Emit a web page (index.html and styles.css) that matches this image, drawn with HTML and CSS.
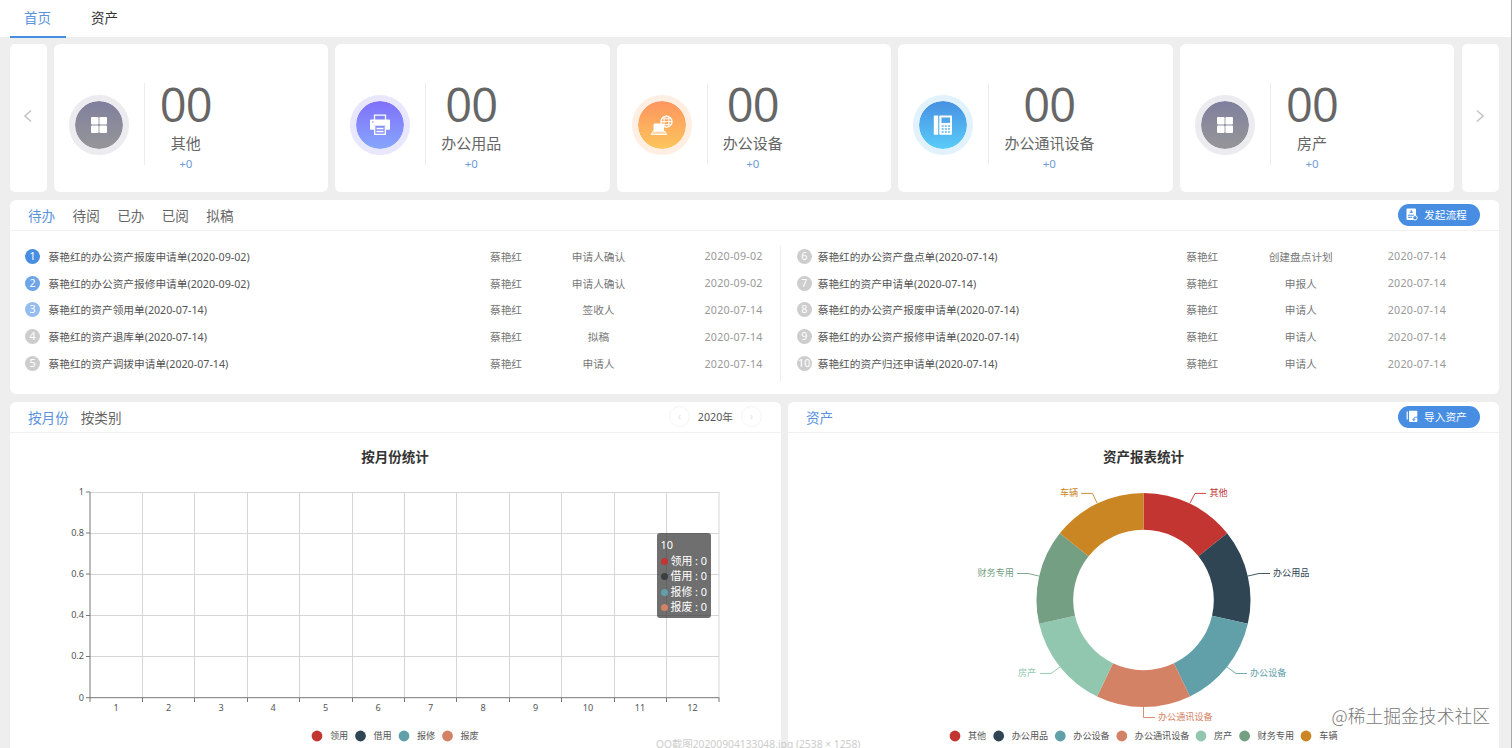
FILE: index.html
```
<!DOCTYPE html>
<html lang="zh-CN">
<head>
    <meta charset="UTF-8">
    <meta name="viewport" content="width=device-width, initial-scale=1.0">
    <title>资产管理</title>
    <link rel="stylesheet" href="styles.css">
</head>
<body>
    <nav class="top-nav">
        <a class="nav-item active">首页</a>
        <a class="nav-item">资产</a>
    </nav>

    <main class="page">
        <section class="stats">
            <div class="stat-arrow">
                <svg width="10" height="14" viewBox="0 0 10 14"><path d="M8 1.5 L2 7 L8 12.5"/></svg>
            </div>
            <div class="stat-card">
                <div class="stat-icon gray">
                    <svg width="24" height="24" viewBox="0 0 24 24" fill="#fff">
                        <rect x="4" y="4" width="7.6" height="7.6" rx="1"/><rect x="12.4" y="4" width="7.6" height="7.6" rx="1"/>
                        <rect x="4" y="12.4" width="7.6" height="7.6" rx="1"/><rect x="12.4" y="12.4" width="7.6" height="7.6" rx="1"/>
                    </svg>
                </div>
                <div class="stat-info">
                    <div class="stat-num">00</div>
                    <div class="stat-name">其他</div>
                    <div class="stat-add">+0</div>
                </div>
            </div>
            <div class="stat-card">
                <div class="stat-icon purple">
                    <svg width="24" height="24" viewBox="0 0 24 24">
                        <path d="M6.5 7V2.2h11V7" fill="none" stroke="#fff" stroke-width="1.3"/>
                        <path d="M3 6.5h18a1 1 0 0 1 1 1v8.3a1 1 0 0 1-1 1h-3v-4H6v4H3a1 1 0 0 1-1-1V7.5a1 1 0 0 1 1-1z" fill="#fff"/>
                        <path d="M6.7 13v8.3h10.6V13" fill="none" stroke="#fff" stroke-width="1.3"/>
                        <path d="M8.5 15.5h7M8.5 18.5h7" stroke="#fff" stroke-width="1.4"/>
                        <circle cx="4.8" cy="9" r=".8" fill="#8a86fb"/>
                    </svg>
                </div>
                <div class="stat-info">
                    <div class="stat-num">00</div>
                    <div class="stat-name">办公用品</div>
                    <div class="stat-add">+0</div>
                </div>
            </div>
            <div class="stat-card">
                <div class="stat-icon orange">
                    <svg width="24" height="24" viewBox="0 0 24 24" fill="none" stroke="#fff">
                        <circle cx="16.5" cy="8.7" r="5.6" stroke-width="1.3"/>
                        <ellipse cx="16.5" cy="8.7" rx="2.5" ry="5.6"/>
                        <path d="M11 8.7h11M12 5.8h9M12 11.7h9"/>
                        <path d="M4 11h9.5v7H4z" fill="#fff"/>
                        <path d="M3.2 18.2h11.6l2 3.3H1.2z" fill="#ffd9a8" stroke-width=".9"/>
                    </svg>
                </div>
                <div class="stat-info">
                    <div class="stat-num">00</div>
                    <div class="stat-name">办公设备</div>
                    <div class="stat-add">+0</div>
                </div>
            </div>
            <div class="stat-card">
                <div class="stat-icon blue">
                    <svg width="24" height="24" viewBox="0 0 24 24">
                        <path d="M3.6 2.4h3.6v19.4H3.6a.8.8 0 0 1-.8-.8V3.2a.8.8 0 0 1 .8-.8z" fill="#fff"/>
                        <rect x="8.3" y="2.4" width="12.7" height="19.4" rx=".8" fill="#fff"/>
                        <rect x="10.5" y="4.5" width="8.6" height="5.4" fill="#4ea7ea"/>
                        <path d="M10.7 13h8.2M10.7 16h8.2M10.7 19h8.2" stroke="#58b9f0" stroke-width="1.5" stroke-dasharray="2 1.1"/>
                    </svg>
                </div>
                <div class="stat-info">
                    <div class="stat-num">00</div>
                    <div class="stat-name">办公通讯设备</div>
                    <div class="stat-add">+0</div>
                </div>
            </div>
            <div class="stat-card">
                <div class="stat-icon gray">
                    <svg width="24" height="24" viewBox="0 0 24 24" fill="#fff">
                        <rect x="4" y="4" width="7.6" height="7.6" rx="1"/><rect x="12.4" y="4" width="7.6" height="7.6" rx="1"/>
                        <rect x="4" y="12.4" width="7.6" height="7.6" rx="1"/><rect x="12.4" y="12.4" width="7.6" height="7.6" rx="1"/>
                    </svg>
                </div>
                <div class="stat-info">
                    <div class="stat-num">00</div>
                    <div class="stat-name">房产</div>
                    <div class="stat-add">+0</div>
                </div>
            </div>
            <div class="stat-arrow">
                <svg width="10" height="14" viewBox="0 0 10 14"><path d="M2 1.5 L8 7 L2 12.5"/></svg>
            </div>
        </section>

        <section class="panel todo">
            <header class="panel-head">
                <div class="tabs wide">
                    <a class="active">待办</a><a>待阅</a><a>已办</a><a>已阅</a><a>拟稿</a>
                </div>
                <button class="btn">
                    <svg width="12" height="13" viewBox="0 0 12 13">
                        <rect x=".5" y=".5" width="9.5" height="11.5" rx="1" fill="#fff"/>
                        <path d="M5.2 2v3M3.5 4.2h3.5M2 7.2h6M2 9.3h4" stroke="#478ee2" fill="none"/>
                        <circle cx="9" cy="9.8" r="2.2" fill="#478ee2" stroke="#fff"/>
                    </svg>
                    <span>发起流程</span>
                </button>
            </header>
            <div class="todo-body">
                <ul class="todo-list left">
                    <li><i class="n1">1</i><b>蔡艳红的办公资产报废申请单(2020-09-02)</b><span>蔡艳红</span><span>申请人确认</span><time>2020-09-02</time></li>
                    <li><i class="n2">2</i><b>蔡艳红的办公资产报修申请单(2020-09-02)</b><span>蔡艳红</span><span>申请人确认</span><time>2020-09-02</time></li>
                    <li><i class="n3">3</i><b>蔡艳红的资产领用单(2020-07-14)</b><span>蔡艳红</span><span>签收人</span><time>2020-07-14</time></li>
                    <li><i>4</i><b>蔡艳红的资产退库单(2020-07-14)</b><span>蔡艳红</span><span>拟稿</span><time>2020-07-14</time></li>
                    <li><i>5</i><b>蔡艳红的资产调拨申请单(2020-07-14)</b><span>蔡艳红</span><span>申请人</span><time>2020-07-14</time></li>
                </ul>
                <ul class="todo-list right">
                    <li><i>6</i><b>蔡艳红的办公资产盘点单(2020-07-14)</b><span>蔡艳红</span><span>创建盘点计划</span><time>2020-07-14</time></li>
                    <li><i>7</i><b>蔡艳红的资产申请单(2020-07-14)</b><span>蔡艳红</span><span>申报人</span><time>2020-07-14</time></li>
                    <li><i>8</i><b>蔡艳红的办公资产报废申请单(2020-07-14)</b><span>蔡艳红</span><span>申请人</span><time>2020-07-14</time></li>
                    <li><i>9</i><b>蔡艳红的办公资产报修申请单(2020-07-14)</b><span>蔡艳红</span><span>申请人</span><time>2020-07-14</time></li>
                    <li><i>10</i><b>蔡艳红的资产归还申请单(2020-07-14)</b><span>蔡艳红</span><span>申请人</span><time>2020-07-14</time></li>
                </ul>
            </div>
        </section>

        <section class="charts">
            <div class="panel chart-panel">
                <header class="panel-head">
                    <div class="tabs">
                        <a class="active">按月份</a><a>按类别</a>
                    </div>
                    <div class="year">
                        <span class="round">‹</span>
                        <em>2020年</em>
                        <span class="round">›</span>
                    </div>
                </header>
                <svg class="chart" width="771" height="315" viewBox="10 433 771 315">
                    <text class="chart-title" x="395" y="461.5">按月份统计</text>
                    <!-- split lines -->
                    <path class="grid" d="M90 492.5H719M90 533.5H719M90 574.5H719M90 615.5H719M90 656.5H719
                        M142.5 492V697M194.5 492V697M247.5 492V697M299.5 492V697M352.5 492V697M404.5 492V697
                        M456.5 492V697M509.5 492V697M561.5 492V697M614.5 492V697M666.5 492V697M719 492V697"/>
                    <!-- axes and ticks -->
                    <path class="axis" d="M90 492V702M86 697.7H719.5M86 492H90M86 533H90M86 574H90M86 615.5H90M86 656.5H90
                        M142.5 698v4M194.5 698v4M247.5 698v4M299.5 698v4M352.5 698v4M404.5 698v4
                        M456.5 698v4M509.5 698v4M561.5 698v4M614.5 698v4M666.5 698v4M719 698v4"/>
                    <g class="label end">
                        <text x="84" y="494.5">1</text>
                        <text x="84" y="535.5">0.8</text>
                        <text x="84" y="576.5">0.6</text>
                        <text x="84" y="617.5">0.4</text>
                        <text x="84" y="659">0.2</text>
                        <text x="84" y="700.5">0</text>
                    </g>
                    <g class="label mid">
                        <text x="116" y="710.5">1</text>
                        <text x="168.5" y="710.5">2</text>
                        <text x="221" y="710.5">3</text>
                        <text x="273" y="710.5">4</text>
                        <text x="325.5" y="710.5">5</text>
                        <text x="378" y="710.5">6</text>
                        <text x="430.5" y="710.5">7</text>
                        <text x="483" y="710.5">8</text>
                        <text x="535.5" y="710.5">9</text>
                        <text x="588" y="710.5">10</text>
                        <text x="640" y="710.5">11</text>
                        <text x="692.5" y="710.5">12</text>
                    </g>
                    <g class="label">
                        <circle cx="317" cy="736" r="5.4" fill="#c23531"/><text x="330" y="739">领用</text>
                        <circle cx="360.5" cy="736" r="5.4" fill="#2f4554"/><text x="373.5" y="739">借用</text>
                        <circle cx="404" cy="736" r="5.4" fill="#61a0a8"/><text x="417" y="739">报修</text>
                        <circle cx="447.5" cy="736" r="5.4" fill="#d48265"/><text x="460.5" y="739">报废</text>
                    </g>
                </svg>
                <div class="tooltip">
                    <p>10</p>
                    <p><i class="c1"></i>领用 : 0</p>
                    <p><i class="c2"></i>借用 : 0</p>
                    <p><i class="c3"></i>报修 : 0</p>
                    <p><i class="c4"></i>报废 : 0</p>
                </div>
            </div>

            <div class="panel chart-panel">
                <header class="panel-head">
                    <div class="tabs">
                        <a class="active">资产</a>
                    </div>
                    <button class="btn">
                        <svg width="12" height="13" viewBox="0 0 12 13">
                            <path d="M1.2 1.5v8" stroke="#fff" stroke-width="1.2"/>
                            <path d="M3 .8h7.5a.8.8 0 0 1 .8.8V12H3.8a.8.8 0 0 1-.8-.8z" fill="#fff"/>
                            <path d="M11.8 7.2H9.6a1.8 1.8 0 0 0-1.8 1.8v1.2M6.5 9l1.4 1.6L9.3 9" stroke="#478ee2" stroke-width="1" fill="none"/>
                        </svg>
                        <span>导入资产</span>
                    </button>
                </header>
                <svg class="chart" width="711" height="315" viewBox="788 433 711 315">
                    <text class="chart-title" x="1143.5" y="461.5">资产报表统计</text>
                    <g transform="translate(1143.5 600)">
                        <path fill="#c23531" d="M0 -107A107 107 0 0 1 83.66 -66.71L54.96 -43.83A70.3 70.3 0 0 0 0 -70.3z"/>
                        <path fill="#2f4554" d="M83.66 -66.71A107 107 0 0 1 104.32 23.81L68.54 15.64A70.3 70.3 0 0 0 54.96 -43.83z"/>
                        <path fill="#61a0a8" d="M104.32 23.81A107 107 0 0 1 46.42 96.4L30.5 63.34A70.3 70.3 0 0 0 68.54 15.64z"/>
                        <path fill="#d48265" d="M46.42 96.4A107 107 0 0 1 -46.42 96.4L-30.5 63.34A70.3 70.3 0 0 0 30.5 63.34z"/>
                        <path fill="#91c7ae" d="M-46.42 96.4A107 107 0 0 1 -104.32 23.81L-68.54 15.64A70.3 70.3 0 0 0 -30.5 63.34z"/>
                        <path fill="#749f83" d="M-104.32 23.81A107 107 0 0 1 -83.66 -66.71L-54.96 -43.83A70.3 70.3 0 0 0 -68.54 15.64z"/>
                        <path fill="#ca8622" d="M-83.66 -66.71A107 107 0 0 1 0 -107L0 -70.3A70.3 70.3 0 0 0 -54.96 -43.83z"/>
                    </g>
                    <g fill="none" stroke-width=".9">
                        <path stroke="#c23531" d="M1190 503L1195 493.4H1206"/>
                        <path stroke="#2f4554" d="M1248 576L1259 573.5H1270"/>
                        <path stroke="#61a0a8" d="M1227 667L1236 673.5H1247"/>
                        <path stroke="#d48265" d="M1143.5 707V717.5H1155"/>
                        <path stroke="#91c7ae" d="M1060 667L1051 673.5H1040"/>
                        <path stroke="#749f83" d="M1039 576L1028 573.5H1017"/>
                        <path stroke="#ca8622" d="M1097 503L1092.5 493.4H1081"/>
                    </g>
                    <g class="pie-label">
                        <text x="1209.5" y="496" fill="#c23531">其他</text>
                        <text x="1273" y="576" fill="#2f4554">办公用品</text>
                        <text x="1250" y="676" fill="#61a0a8">办公设备</text>
                        <text x="1158" y="720" fill="#d48265">办公通讯设备</text>
                        <text x="1018" y="676" fill="#91c7ae">房产</text>
                        <text x="977.5" y="576" fill="#749f83">财务专用</text>
                        <text x="1060" y="496" fill="#ca8622">车辆</text>
                    </g>
                    <g class="label">
                        <circle cx="955" cy="736" r="5.4" fill="#c23531"/><text x="968" y="739">其他</text>
                        <circle cx="998.7" cy="736" r="5.4" fill="#2f4554"/><text x="1011.7" y="739">办公用品</text>
                        <circle cx="1060.3" cy="736" r="5.4" fill="#61a0a8"/><text x="1073.3" y="739">办公设备</text>
                        <circle cx="1121.8" cy="736" r="5.4" fill="#d48265"/><text x="1134.8" y="739">办公通讯设备</text>
                        <circle cx="1201" cy="736" r="5.4" fill="#91c7ae"/><text x="1214" y="739">房产</text>
                        <circle cx="1244.6" cy="736" r="5.4" fill="#749f83"/><text x="1257.6" y="739">财务专用</text>
                        <circle cx="1306" cy="736" r="5.4" fill="#ca8622"/><text x="1319.3" y="739">车辆</text>
                    </g>
                </svg>
            </div>
        </section>
    </main>

    <div class="file-name">QQ截图20200904133048.jpg (2538 × 1258)</div>
    <div class="watermark">@稀土掘金技术社区</div>
</body>
</html>
```
FILE: styles.css
```
* {
    box-sizing: border-box;
    margin: 0;
    padding: 0;
}

body {
    position: relative;
    height: 748px;
    overflow: hidden;
    background-color: #eeeeee;
    border-right: 1px solid #a8a8a8;
    font-family: "Noto Sans", "Noto Sans CJK SC", sans-serif;
    font-size: 10.7px;
    color: #555;
}

/* top navigation */
.top-nav {
    display: flex;
    gap: 11px;
    height: 36.5px;
    padding-left: 9.5px;
    background-color: #fff;
}

.nav-item {
    width: 56px;
    height: 37.5px;
    line-height: 36px;
    text-align: center;
    font-size: 13.5px;
    color: #333;
}

.nav-item.active {
    color: #5a92dc;
    border-bottom: 2px solid #478ee2;
}

.page {
    display: flex;
    flex-direction: column;
    gap: 8px;
    padding: 7px 12.5px 0 9.5px;
}

/* statistic cards */
.stats {
    display: flex;
    gap: 7.2px;
    height: 148.5px;
}

.stat-arrow {
    width: 37px;
    display: flex;
    align-items: center;
    justify-content: center;
    padding-bottom: 3px;
    background-color: #fff;
    border-radius: 5px;
}

.stat-arrow svg {
    fill: none;
    stroke: #c4c4c4;
    stroke-width: 1.6;
}

.stat-card {
    flex: 1;
    display: flex;
    align-items: center;
    padding: 15px 0 0 15px;
    background-color: #fff;
    border-radius: 6px;
}

.stat-icon {
    width: 60px;
    height: 60px;
    display: flex;
    align-items: center;
    justify-content: center;
    border: 6px solid #ebebf0;
    border-radius: 50%;
    background-clip: padding-box;
}

.stat-icon.gray {
    background-image: linear-gradient(#7f7f9e, #969698);
}

.stat-icon.purple {
    border-color: #e8e7fd;
    background-image: linear-gradient(#8070fa, #86a6fc);
}

.stat-icon.orange {
    border-color: #feefe2;
    background-image: linear-gradient(#fd9560, #fcc55c);
}

.stat-icon.blue {
    border-color: #e2f2fc;
    background-image: linear-gradient(#4790e2, #5accf8);
}

.stat-info {
    height: 82px;
    margin: 0 0 2px 15px;
    padding-left: 15px;
    border-left: 1px solid #ececec;
    text-align: center;
}

.stat-num {
    height: 49px;
    line-height: 42px;
    font-family: "Open Sans", "Noto Sans", sans-serif;
    font-size: 47px;
    letter-spacing: -0.8px;
    color: #666;
}

.stat-name {
    height: 23px;
    line-height: 23px;
    font-size: 15px;
    color: #666;
}

.stat-add {
    line-height: 18px;
    font-size: 11.5px;
    color: #6f9bd6;
}

/* panels */
.panel {
    background-color: #fff;
    border-radius: 6px;
}

.panel-head {
    display: flex;
    align-items: center;
    justify-content: space-between;
    height: 31px;
    padding: 0 18.5px 1px 18.5px;
    border-bottom: 1px solid #f0f0f0;
}

.tabs {
    display: flex;
    gap: 12px;
    font-size: 13.6px;
    color: #666;
}

.tabs.wide {
    gap: 17.4px;
}

.tabs .active {
    color: #5a92dc;
}

.btn {
    display: flex;
    align-items: center;
    gap: 6px;
    width: 82px;
    height: 22px;
    padding: 0 0 1px 8px;
    border: none;
    border-radius: 11px;
    background-color: #478ee2;
    color: #fff;
    font-family: inherit;
    font-size: 10.7px;
}

/* todo list */
.todo {
    height: 194px;
}

.todo-body {
    display: flex;
    padding-top: 15px;
}

.todo-list {
    list-style: none;
    height: 136px;
}

.todo-list li {
    display: grid;
    align-items: center;
    height: 26.8px;
    position: relative;
    top: -3px;
}

.todo-list.left {
    width: 771.5px;
    padding: 0 17px 0 15.5px;
    border-right: 1px solid #eee;
}

.todo-list.left li {
    grid-template-columns: 23.5px 411px 93px 92px 1fr;
}

.todo-list.right {
    width: 718px;
    padding: 0 52.5px 0 16px;
}

.todo-list.right li {
    grid-template-columns: 21px 335.5px 98px 99px 1fr;
}

.todo-list i {
    width: 15px;
    height: 15px;
    line-height: 15px;
    border-radius: 50%;
    background-color: #cdcdcd;
    color: #fff;
    font-style: normal;
    text-align: center;
}

.todo-list .n1 {
    background-color: #478ee2;
}

.todo-list .n2 {
    background-color: #6ea5e8;
}

.todo-list .n3 {
    background-color: #94bcef;
}

.todo-list b {
    font-weight: normal;
    color: #555;
}

.todo-list span {
    text-align: center;
    color: #777;
}

.todo-list time {
    text-align: right;
    letter-spacing: 0.25px;
    color: #999;
}

/* charts */
.charts {
    display: grid;
    grid-template-columns: 771px 1fr;
    gap: 7px;
    height: 354px;
}

.chart-panel {
    position: relative;
}

.chart {
    display: block;
}

.year {
    display: flex;
    align-items: center;
    gap: 8px;
}

.year em {
    font-style: normal;
}

.round {
    width: 21px;
    height: 21px;
    line-height: 18px;
    border: 1px solid #f4f4f4;
    border-radius: 50%;
    color: #e4e4e4;
    text-align: center;
}

.chart-title {
    font-size: 13.5px;
    font-weight: bold;
    fill: #333;
    text-anchor: middle;
}

.grid {
    fill: none;
    stroke: #d6d6d6;
}

.axis {
    fill: none;
    stroke: #777;
}

.label {
    font-size: 9.1px;
    fill: #555;
}

.label.end {
    text-anchor: end;
}

.label.mid {
    text-anchor: middle;
}

.pie-label {
    font-size: 9.1px;
}

.tooltip {
    position: absolute;
    left: 647px;
    top: 130.5px;
    width: 54px;
    height: 85px;
    padding: 4.5px 0 0 4px;
    border-radius: 3px;
    background-color: rgba(50, 50, 50, 0.7);
    color: #fff;
    font-size: 10.9px;
    line-height: 15.6px;
    white-space: nowrap;
}

.tooltip i {
    display: inline-block;
    width: 7px;
    height: 7px;
    margin-right: 3px;
    border-radius: 50%;
}

.c1 {
    background-color: #c23531;
}

.c2 {
    background-color: #3a3f42;
}

.c3 {
    background-color: #61a0a8;
}

.c4 {
    background-color: #d48265;
}

.file-name {
    position: absolute;
    left: 656px;
    top: 737px;
    font-size: 10.3px;
    line-height: 15px;
    color: #ccc;
    white-space: nowrap;
}

.watermark {
    position: absolute;
    right: 21px;
    top: 702px;
    font-size: 17.8px;
    line-height: 26px;
    font-family: "Noto Sans CJK SC", sans-serif;
    font-weight: 300;
    color: #777;
}
```
